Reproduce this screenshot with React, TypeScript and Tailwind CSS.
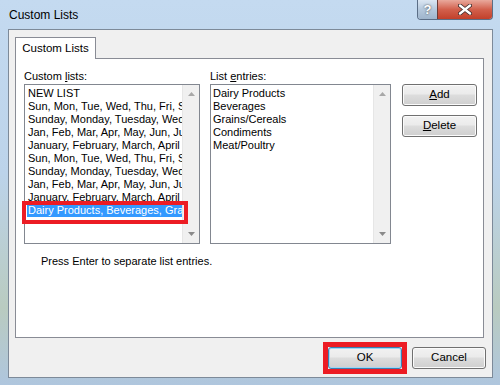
import React from "react";

const customLists = [
  "NEW LIST",
  "Sun, Mon, Tue, Wed, Thu, Fri, Sat",
  "Sunday, Monday, Tuesday, Wednesday",
  "Jan, Feb, Mar, Apr, May, Jun, Jul",
  "January, February, March, April",
  "Sun, Mon, Tue, Wed, Thu, Fri, Sat",
  "Sunday, Monday, Tuesday, Wednesday",
  "Jan, Feb, Mar, Apr, May, Jun, Jul",
  "January, February, March, April",
  "Dairy Products, Beverages, Grains/Cereals",
];

const entries = ["Dairy Products", "Beverages", "Grains/Cereals", "Condiments", "Meat/Poultry"];

function ScrollBar() {
  return (
    <div className="flex w-[17px] shrink-0 flex-col items-center justify-between bg-[#f0f0f0] border-l border-[#e6e6e6] py-[7px]">
      <svg width="7" height="4" viewBox="0 0 7 4">
        <path d="M3.5 0 L7 4 L0 4 Z" fill="#a8a8a8" />
      </svg>
      <svg width="7" height="4" viewBox="0 0 7 4">
        <path d="M0 0 L7 0 L3.5 4 Z" fill="#8a8a8a" />
      </svg>
    </div>
  );
}

function WinButton({ children, isDefault }: { children: React.ReactNode; isDefault?: boolean }) {
  return (
    <div
      className={`flex h-[22px] items-center justify-center rounded-[3px] border text-[11.5px] text-black bg-[linear-gradient(180deg,#f2f2f2_0%,#ebebeb_45%,#dddddd_50%,#cfcfcf_100%)] ${
        isDefault ? "border-[#3c7fb1] shadow-[inset_0_0_0_1px_#9fd7f6]" : "border-[#707070] shadow-[inset_0_0_0_1px_#fbfbfb]"
      }`}
    >
      {children}
    </div>
  );
}

export default function App() {
  return (
    <div
      className="flex h-[385px] w-[500px] flex-col overflow-hidden bg-[linear-gradient(180deg,#c4daf0_0%,#bcd3ea_45%,#b9cbc0_80%,#afc6de_100%)] text-black"
      style={{ fontFamily: '"Liberation Sans", Arial, sans-serif' }}
    >
      {/* title bar */}
      <div className="flex h-[29px] shrink-0 items-start justify-between pl-[9px] pr-[7px]">
        <span className="mt-[7px] text-[12px] leading-[16px]">Custom Lists</span>
        <div className="flex h-[20px] overflow-hidden rounded-b-[4px] border border-t-0 border-[#5b6e86]">
          <div className="flex w-[19px] items-center justify-center bg-[linear-gradient(180deg,#dbe6f2,#b5c8dc_50%,#9fb5cc)] text-[13px] font-bold text-white [text-shadow:0_0_2px_#333]">
            ?
          </div>
          <div className="flex w-[55px] items-center justify-center border-l border-[#6b3a35] bg-[linear-gradient(180deg,#e9a99c,#d2604c_50%,#c2402b)]">
            <svg width="14" height="11" viewBox="0 0 14 11">
              <path d="M2 1.5 L12 9.5 M12 1.5 L2 9.5" stroke="#3a2a2a" strokeWidth="4" strokeLinecap="round" />
              <path d="M2 1.5 L12 9.5 M12 1.5 L2 9.5" stroke="#ffffff" strokeWidth="2.4" strokeLinecap="round" />
            </svg>
          </div>
        </div>
      </div>

      {/* client area */}
      <div className="mx-[7px] ml-[8px] mb-[7px] flex flex-1 flex-col border border-[#7d8a99] bg-[#f0f0f0] px-[6px] pt-[7px]">
        {/* tab */}
        <div className="flex">
          <div className="relative z-10 -mb-px flex h-[22px] w-[81px] items-center justify-center border border-b-0 border-[#898c95] bg-white text-[11.5px]">
            Custom Lists
          </div>
        </div>
        <div className="mr-[2px] h-[280px] border border-[#898c95] bg-white">
          <div className="flex gap-[10px] pl-[8px] pt-[9px]">
            <div className="flex w-[176px] flex-col">
              <span className="h-[16px] text-[11px] leading-[16px]">
                Custom <span className="underline">l</span>ists:
              </span>
              <div className="relative flex h-[160px] border border-[#828790]">
                <div className="flex-1 overflow-hidden pt-[2px] pl-[2px] text-[11px] leading-[13px]">
                  {customLists.map((item, i) => (
                    <div
                      key={i}
                      className={`h-[13px] whitespace-nowrap pl-px ${
                        i === customLists.length - 1 ? "bg-[#3399ff] text-white" : ""
                      }`}
                    >
                      {item}
                    </div>
                  ))}
                </div>
                <ScrollBar />
                {/* red annotation box */}
                <div className="pointer-events-none absolute left-[-3px] top-[116px] h-[23px] w-[166px] border-[4px] border-[#ec1c24]" />
              </div>
            </div>
            <div className="flex w-[181px] flex-col">
              <span className="h-[16px] text-[11px] leading-[16px]">
                List <span className="underline">e</span>ntries:
              </span>
              <div className="flex h-[160px] border border-[#828790]">
                <div className="flex-1 overflow-hidden pt-[2px] pl-[2px] text-[11px] leading-[13px]">
                  {entries.map((e) => (
                    <div key={e} className="h-[13px] whitespace-nowrap">
                      {e}
                    </div>
                  ))}
                </div>
                <ScrollBar />
              </div>
            </div>
            <div className="ml-px flex w-[75px] flex-col gap-[9px] pt-[16px]">
              <WinButton>
                <span className="underline">A</span>dd
              </WinButton>
              <WinButton>
                <span className="underline">D</span>elete
              </WinButton>
            </div>
          </div>
          <div className="pl-[25px] pt-[9px] text-[11px] leading-[16px]">Press Enter to separate list entries.</div>
        </div>

        {/* footer buttons */}
        <div className="flex justify-end gap-[10px] pt-[9px]">
          <div className="w-[74px] outline outline-[5px] outline-[#ec1c24]">
            <WinButton isDefault>OK</WinButton>
          </div>
          <div className="w-[74px]">
            <WinButton>Cancel</WinButton>
          </div>
        </div>
      </div>
    </div>
  );
}
